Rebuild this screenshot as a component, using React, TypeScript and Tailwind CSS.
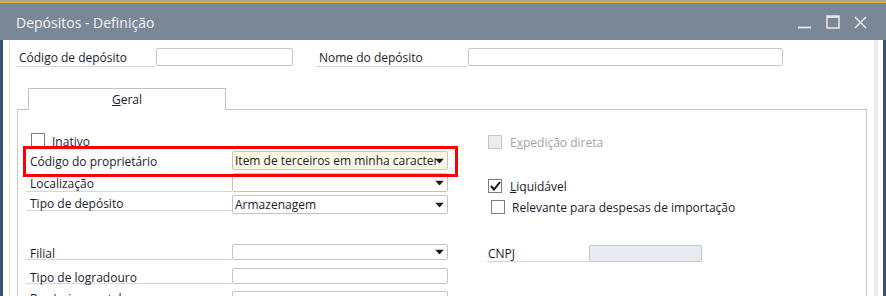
import React from "react";

const Arrow = () => (
  <svg width="9" height="5" viewBox="0 0 9 5" className="absolute right-[3px] top-1/2 -translate-y-1/2">
    <path d="M0 0 H9 L4.5 5 Z" fill="#1a1a1a" />
  </svg>
);

function Dropdown({ text, bg = "bg-white", h = "h-[19px]" }: { text?: string; bg?: string; h?: string }) {
  return (
    <div className={`relative w-[216px] ${h} border border-[#c4c4c4] rounded-[2px] ${bg} overflow-hidden`}>
      <div className="absolute left-[2px] right-[11px] top-0 bottom-0 pt-[1px] flex items-center whitespace-nowrap overflow-hidden text-[#1a1a2a]">
        {text}
      </div>
      <Arrow />
    </div>
  );
}

function Box({ checked = false, disabled = false }: { checked?: boolean; disabled?: boolean }) {
  return (
    <div
      className={`w-[14px] h-[14px] border shrink-0 flex items-center justify-center ${
        disabled ? "border-[#c6c6c6] bg-[#ececec]" : "border-[#7d7d7d] bg-white"
      }`}
    >
      {checked && (
        <svg width="11" height="10" viewBox="0 0 11 10">
          <path d="M1 5 L4 8.5 L10 1" stroke="#111" strokeWidth="2" fill="none" />
        </svg>
      )}
    </div>
  );
}

export default function App() {
  return (
    <div
      className="w-[886px] h-[296px] overflow-hidden bg-white relative flex flex-col text-[12px] text-[#1b1b2b]"
      style={{ fontFamily: '"Open Sans", "Noto Sans", sans-serif' }}
    >
      <div className="h-[1px] bg-[#a8a494]" />
      <div className="h-[2px] bg-[#e9a935]" />
      <div className="h-[37px] bg-[#7a8797] flex items-center pl-[16px]">
        <span className="text-[14px] text-[#f3f5f7] leading-none mt-[2px]">Depósitos - Definição</span>
        <div className="ml-auto flex items-end h-[14px] mr-[19px] mt-[1px]">
          <svg width="14" height="14" viewBox="0 0 14 14">
            <path d="M0 12.5 H13" stroke="#e6eaee" strokeWidth="1.8" />
          </svg>
          <svg width="14" height="14" viewBox="0 0 14 14" className="ml-[14px]">
            <rect x="1" y="1" width="12" height="12" stroke="#e6eaee" strokeWidth="1.5" fill="none" />
            <path d="M1 2 H13" stroke="#e6eaee" strokeWidth="1.8" />
          </svg>
          <svg width="13" height="13" viewBox="0 0 13 13" className="ml-[14px]">
            <path d="M1 1 L12 12 M12 1 L1 12" stroke="#e6eaee" strokeWidth="1.5" />
          </svg>
        </div>
      </div>
      <div className="flex flex-1 min-h-0">
        <div className="w-[3px] bg-[#3b5275]" />
        <div className="w-[6px]" />
        <div className="flex-1 border-l border-[#e4e4e4] flex flex-col min-w-0">
          {/* header row */}
          <div className="mt-[8px] h-[19px] flex items-start">
            <div className="ml-[6px] w-[140px] h-[19px] border-b border-[#cfd8e2] pl-[3px] pt-[2px] flex items-center">
              Código de depósito
            </div>
            <div className="w-[137px] h-[18px] border border-[#c6c6c6] rounded-[2px]" />
            <div className="ml-[23px] w-[152px] h-[19px] border-b border-[#cfd8e2] pl-[3px] pt-[2px] flex items-center">
              Nome do depósito
            </div>
            <div className="w-[315px] h-[18px] border border-[#c6c6c6] rounded-[2px]" />
          </div>
          {/* tabs + panel */}
          <div className="mt-[21px] mx-[7px] flex flex-col flex-1">
            <div className="flex h-[22px]">
              <div className="w-[11px] border-b border-[#c2c2c2]" />
              <div className="w-[198px] border-t border-l border-r border-[#c2c2c2] flex items-center justify-center">
                <span>
                  <span className="underline">G</span>eral
                </span>
              </div>
              <div className="flex-1 border-b border-[#c2c2c2]" />
            </div>
            <div className="flex-1 border-l border-r border-[#c8c8c8] flex">
              {/* left column */}
              <div className="ml-[8px] w-[422px] flex flex-col">
                <div className="mt-[23px] h-[14px] flex items-center">
                  <div className="ml-[5px]">
                    <Box />
                  </div>
                  <span className="ml-[7px] mt-[4px]">Inativo</span>
                </div>
                <div className="mt-[4px] flex items-start">
                  <div className="w-[206px] h-[19px] pl-[4px] pt-[2px] flex items-center">Código do proprietário</div>
                  <Dropdown text="Item de terceiros em minha caracterização" bg="bg-[#fdf8e4]" />
                </div>
                <div className="mt-[3px] flex items-start">
                  <div className="w-[206px] h-[19px] pl-[4px] pt-[3px] border-b border-[#cfd8e2] flex items-center">Localização</div>
                  <Dropdown />
                </div>
                <div className="mt-[3px] flex items-start">
                  <div className="w-[206px] h-[16px] pl-[4px] pt-[2px] border-b border-[#cfd8e2] flex items-center">Tipo de depósito</div>
                  <Dropdown text="Armazenagem" />
                </div>
                <div className="mt-[30px] flex items-start">
                  <div className="w-[206px] h-[16px] pl-[4px] pt-[4px] border-b border-[#cfd8e2] flex items-center">Filial</div>
                  <Dropdown h="h-[16px]" />
                </div>
                <div className="mt-[8px] flex items-start">
                  <div className="w-[206px] h-[16px] pl-[4px] pt-[4px] border-b border-[#cfd8e2] flex items-center">Tipo de logradouro</div>
                  <div className="w-[216px] h-[16px] border border-[#c4c4c4] rounded-[2px]" />
                </div>
                <div className="mt-[7px] flex items-start">
                  <div className="w-[206px] h-[16px] pl-[4px] flex items-center">Rua/caixa postal</div>
                  <div className="w-[216px] h-[16px] border border-[#c4c4c4] rounded-[2px]" />
                </div>
              </div>
              {/* right column */}
              <div className="ml-[39px] flex flex-col">
                <div className="mt-[25px] h-[14px] flex items-center">
                  <div className="ml-[1px]">
                    <Box disabled />
                  </div>
                  <span className="ml-[8px] mt-[1px] text-[#a3a3a3]">
                    E<span className="underline">x</span>pedição direta
                  </span>
                </div>
                <div className="mt-[30px] h-[14px] flex items-center">
                  <div className="ml-[1px]">
                    <Box checked />
                  </div>
                  <span className="ml-[8px] mt-[2px]">
                    <span className="underline">L</span>iquidável
                  </span>
                </div>
                <div className="mt-[7px] h-[14px] flex items-center">
                  <div className="ml-[4px]">
                    <Box />
                  </div>
                  <span className="ml-[7px] mt-[1px]">Relevante para despesas de importação</span>
                </div>
                <div className="mt-[31px] flex items-start">
                  <div className="w-[102px] h-[17px] pl-[1px] pt-[2px] border-b border-[#cfd8e2] flex items-center">CNPJ</div>
                  <div className="w-[113px] h-[17px] border border-[#c6c6c6] rounded-[2px] bg-[#e8ebef]" />
                </div>
              </div>
            </div>
          </div>
        </div>
        <div className="w-[4px] bg-[#ececec]" />
        <div className="w-[5px]" />
        <div className="w-[3px] bg-[#3b5275]" />
      </div>
      {/* annotation red box */}
      <div className="absolute left-[23px] top-[146px] w-[435px] h-[31px] border-[3px] border-[#ff0000]" />
    </div>
  );
}
